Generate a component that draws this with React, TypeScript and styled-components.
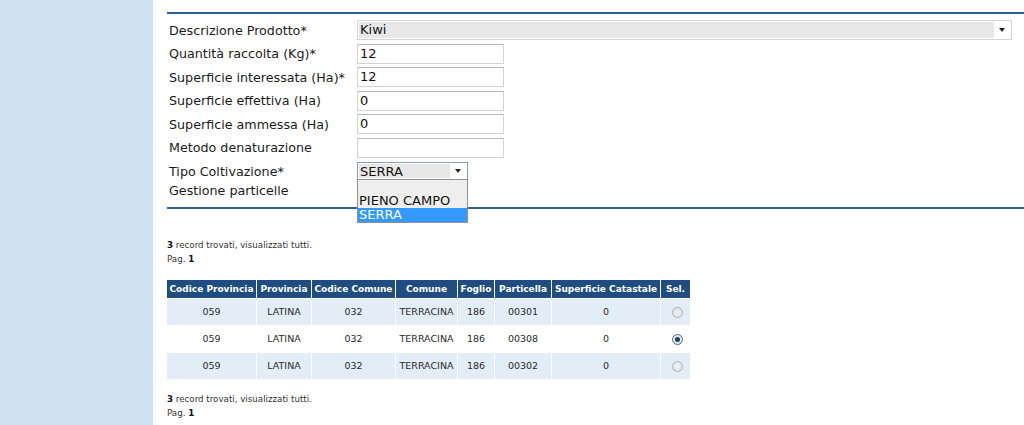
import React from "react";
import styled, { createGlobalStyle } from "styled-components";

const Global = createGlobalStyle`
  html, body { margin: 0; padding: 0; background: #ffffff; }
  body { font-family: "DejaVu Sans", Verdana, sans-serif; }
`;

const Page = styled.div`
  display: flex;
  width: 1024px;
  height: 425px;
  overflow: hidden;
`;

const Sidebar = styled.div`
  width: 153px;
  flex: none;
  background: #d0e3f2;
`;

const Main = styled.div`
  flex: 1;
  padding: 12px 0 0 14px;
  position: relative;
`;

const Rule = styled.div`
  height: 2px;
  background: #2c5f98;
`;

const Form = styled.div`
  display: grid;
  grid-template-columns: 188px 1fr;
  grid-auto-rows: 20px;
  row-gap: 3.5px;
  padding: 6px 12px 2px 2px;
`;

const Label = styled.div`
  font-size: 12.7px;
  color: #1a1a1a;
  display: flex;
  align-items: center;
  white-space: nowrap;
`;

const Field = styled.div`
  display: flex;
  align-items: center;
  position: relative;
`;

const TextInput = styled.div`
  box-sizing: border-box;
  width: 147px;
  height: 20px;
  border: 1px solid #d2d2d2;
  border-top-color: #b9b9b9;
  background: #fff;
  font-size: 13px;
  color: #111;
  padding-left: 2px;
  line-height: 18px;
`;

const SelectBox = styled.div<{ $width: string; $focus?: boolean }>`
  box-sizing: border-box;
  width: ${(p) => p.$width};
  height: ${(p) => (p.$focus ? "18px" : "20px")};
  border: 1px solid ${(p) => (p.$focus ? "#8c9db2" : "#d4d4d4")};
  background: #fff;
  display: flex;
  align-items: stretch;
  padding: 1px;
`;

const SelectValue = styled.div`
  flex: 1;
  background: #e8e8e8;
  font-size: 13px;
  color: #111;
  padding-left: 1px;
  line-height: 16px;
`;

const Arrow = styled.div`
  width: 16px;
  flex: none;
  display: flex;
  align-items: center;
  justify-content: center;
  &::after {
    content: "";
    border-left: 3px solid transparent;
    border-right: 3px solid transparent;
    border-top: 4px solid #222;
  }
`;

const DropList = styled.div`
  position: absolute;
  left: 0;
  top: 18px;
  width: 111px;
  box-sizing: border-box;
  border: 1px solid #8f8f8f;
  background: #eeeeee;
  z-index: 2;
  padding-top: 14px;
`;

const Option = styled.div<{ $sel?: boolean }>`
  font-size: 13px;
  line-height: 14px;
  padding-left: 1px;
  color: ${(p) => (p.$sel ? "#fff" : "#111")};
  background: ${(p) => (p.$sel ? "#3399ff" : "transparent")};
`;

const LastRow = styled.div`
  grid-column: 1 / -1;
  margin-top: -2px;
`;

const Info = styled.div`
  font-size: 8.7px;
  color: #333;
  line-height: 14px;
  b { color: #111; }
`;

const InfoTop = styled.div`
  margin-top: 29px;
`;

const InfoBottom = styled.div`
  margin-top: 12px;
`;

const Table = styled.table`
  border-collapse: collapse;
  margin-top: 14px;
  font-size: 9.5px;
`;

const Th = styled.th<{ $w: number }>`
  width: ${(p) => p.$w}px;
  background: #1f4d82;
  color: #fff;
  font-weight: bold;
  font-size: 9px;
  height: 18px;
  padding: 0 2px;
  border: 1px solid #fff;
  border-top: none;
  white-space: nowrap;
  text-align: center;
  &:first-child { border-left: none; }
`;

const Td = styled.td<{ $alt: boolean }>`
  background: ${(p) => (p.$alt ? "#e3edf7" : "#ffffff")};
  color: #2a2a2a;
  height: 24px;
  text-align: center;
  border: 1px solid #fff;
  &:first-child { border-left: none; }
`;

const Radio = styled.span<{ $on?: boolean }>`
  display: inline-block;
  width: 9px;
  height: 9px;
  border-radius: 50%;
  border: 1px solid #a9b3bd;
  background: radial-gradient(circle, #f4f4f4 0%, #dcdcdc 100%);
  position: relative;
  vertical-align: middle;
  left: 2px;
  ${(p) =>
    p.$on &&
    `
    border-color: #4f6b86;
    &::after {
      content: "";
      position: absolute;
      left: 2px; top: 2px;
      width: 5px; height: 5px;
      border-radius: 50%;
      background: #1c3f66;
    }
  `}
`;

const labels = [
  "Descrizione Prodotto*",
  "Quantità raccolta (Kg)*",
  "Superficie interessata (Ha)*",
  "Superficie effettiva (Ha)",
  "Superficie ammessa (Ha)",
  "Metodo denaturazione",
];
const values = ["12", "12", "0", "0", ""];

const cols: [string, number][] = [
  ["Codice Provincia", 85],
  ["Provincia", 50],
  ["Codice Comune", 79],
  ["Comune", 57],
  ["Foglio", 32],
  ["Particella", 52],
  ["Superficie Catastale", 104],
  ["Sel.", 25],
];

const rows = [
  ["059", "LATINA", "032", "TERRACINA", "186", "00301", "0", false],
  ["059", "LATINA", "032", "TERRACINA", "186", "00308", "0", true],
  ["059", "LATINA", "032", "TERRACINA", "186", "00302", "0", false],
] as const;

const RecordInfo = () => (
  <Info>
    <div>
      <b>3</b> record trovati, visualizzati tutti.
    </div>
    <div>
      Pag. <b>1</b>
    </div>
  </Info>
);

export default function App() {
  return (
    <>
      <Global />
      <Page>
        <Sidebar />
        <Main>
          <Rule />
          <Form>
            <Label>{labels[0]}</Label>
            <Field>
              <SelectBox $width="655px">
                <SelectValue>Kiwi</SelectValue>
                <Arrow />
              </SelectBox>
            </Field>
            {labels.slice(1).map((l, i) => (
              <React.Fragment key={l}>
                <Label>{l}</Label>
                <Field>
                  <TextInput>{values[i]}</TextInput>
                </Field>
              </React.Fragment>
            ))}
            <Label>Tipo Coltivazione*</Label>
            <Field>
              <SelectBox $width="111px" $focus>
                <SelectValue>SERRA</SelectValue>
                <Arrow />
              </SelectBox>
              <DropList>
                <Option>PIENO CAMPO</Option>
                <Option $sel>SERRA</Option>
              </DropList>
            </Field>
            <LastRow>
              <Label>Gestione particelle</Label>
            </LastRow>
          </Form>
          <Rule />
          <InfoTop>
            <RecordInfo />
          </InfoTop>
          <Table>
            <thead>
              <tr>
                {cols.map(([c, w]) => (
                  <Th key={c} $w={w}>
                    {c}
                  </Th>
                ))}
              </tr>
            </thead>
            <tbody>
              {rows.map((r, i) => (
                <tr key={i}>
                  {r.slice(0, 7).map((v, j) => (
                    <Td key={j} $alt={i % 2 === 0}>
                      {v as string}
                    </Td>
                  ))}
                  <Td $alt={i % 2 === 0}>
                    <Radio $on={r[7] as boolean} />
                  </Td>
                </tr>
              ))}
            </tbody>
          </Table>
          <InfoBottom>
            <RecordInfo />
          </InfoBottom>
        </Main>
      </Page>
    </>
  );
}
